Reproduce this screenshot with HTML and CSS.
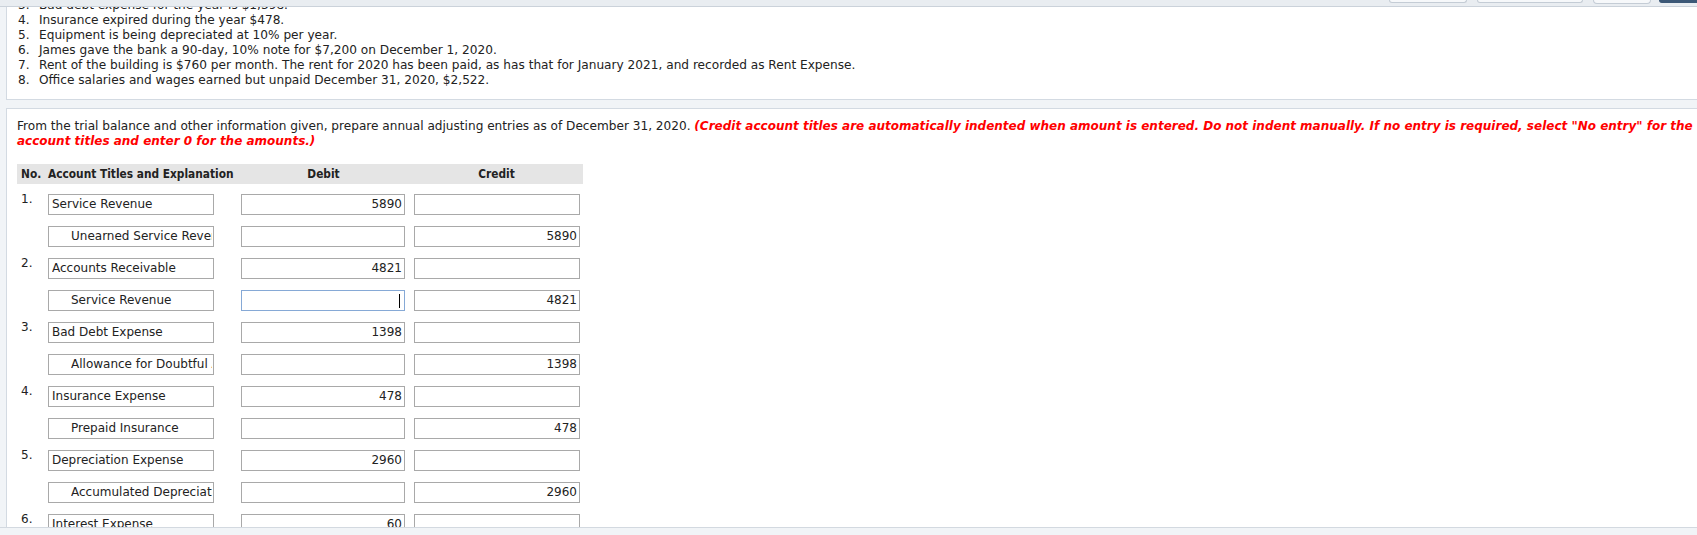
FILE: index.html
```html
<!DOCTYPE html>
<html>
<head>
<meta charset="utf-8">
<title>Adjusting Entries</title>
<link rel="stylesheet" href="styles.css">
</head>
<body>
<div class="toolbar">
  <span class="tbtn w1"></span>
  <span class="tbtn w2"></span>
  <span class="tbtn w3"></span>
  <span class="tbtn dark"></span>
</div>
<div class="viewport">
  <div class="scroller">
    <section class="panel info">
      <ol class="facts">
        <li><span class="num">3.</span><span>Bad debt expense for the year is $1,398.</span></li>
        <li><span class="num">4.</span><span>Insurance expired during the year $478.</span></li>
        <li><span class="num">5.</span><span>Equipment is being depreciated at 10% per year.</span></li>
        <li><span class="num">6.</span><span>James gave the bank a 90-day, 10% note for $7,200 on December 1, 2020.</span></li>
        <li><span class="num">7.</span><span>Rent of the building is $760 per month. The rent for 2020 has been paid, as has that for January 2021, and recorded as Rent Expense.</span></li>
        <li><span class="num">8.</span><span>Office salaries and wages earned but unpaid December 31, 2020, $2,522.</span></li>
      </ol>
    </section>
    <section class="panel work">
      <p class="prompt">From the trial balance and other information given, prepare annual adjusting entries as of December 31, 2020. <em class="note">(Credit account titles are automatically indented when amount is entered. Do not indent manually. If no entry is required, select "No entry" for the account titles and enter 0 for the amounts.)</em></p>
      <div class="journal">
        <div class="jhead">
          <div class="h-no">No.</div>
          <div class="h-acct">Account Titles and Explanation</div>
          <div class="h-amt">Debit</div>
          <div class="h-amt">Credit</div>
        </div>

        <div class="jrow"><div class="no">1.</div><div class="field acct"><span class="txt">Service Revenue</span></div><div class="field amt">5890</div><div class="field amt"></div></div>
        <div class="jrow"><div class="no"></div><div class="field acct cr"><span class="txt">Unearned Service Revenue</span></div><div class="field amt"></div><div class="field amt">5890</div></div>

        <div class="jrow"><div class="no">2.</div><div class="field acct"><span class="txt">Accounts Receivable</span></div><div class="field amt">4821</div><div class="field amt"></div></div>
        <div class="jrow"><div class="no"></div><div class="field acct cr"><span class="txt">Service Revenue</span></div><div class="field amt focus"><span class="caret"></span></div><div class="field amt">4821</div></div>

        <div class="jrow"><div class="no">3.</div><div class="field acct"><span class="txt">Bad Debt Expense</span></div><div class="field amt">1398</div><div class="field amt"></div></div>
        <div class="jrow"><div class="no"></div><div class="field acct cr"><span class="txt">Allowance for Doubtful Accounts</span></div><div class="field amt"></div><div class="field amt">1398</div></div>

        <div class="jrow"><div class="no">4.</div><div class="field acct"><span class="txt">Insurance Expense</span></div><div class="field amt">478</div><div class="field amt"></div></div>
        <div class="jrow"><div class="no"></div><div class="field acct cr"><span class="txt">Prepaid Insurance</span></div><div class="field amt"></div><div class="field amt">478</div></div>

        <div class="jrow"><div class="no">5.</div><div class="field acct"><span class="txt">Depreciation Expense</span></div><div class="field amt">2960</div><div class="field amt"></div></div>
        <div class="jrow"><div class="no"></div><div class="field acct cr"><span class="txt">Accumulated Depreciation - Equipment</span></div><div class="field amt"></div><div class="field amt">2960</div></div>

        <div class="jrow"><div class="no">6.</div><div class="field acct"><span class="txt">Interest Expense</span></div><div class="field amt">60</div><div class="field amt"></div></div>
        <div class="jrow"><div class="no"></div><div class="field acct cr"><span class="txt">Interest Payable</span></div><div class="field amt"></div><div class="field amt">60</div></div>
      </div>
    </section>
  </div>
</div>
<div class="footer-strip"></div>
</body>
</html>
```
FILE: styles.css
```css
html, body {
  margin: 0;
  padding: 0;
  height: 535px;
  overflow: hidden;
  background: #f1f4f7;
  font-family: "DejaVu Sans", Verdana, sans-serif;
  color: #222;
}

.toolbar {
  height: 6px;
  background: #e9edf1;
  border-bottom: 1px solid #cbd2da;
  display: flex;
  justify-content: flex-end;
  align-items: flex-start;
  gap: 10px;
  overflow: hidden;
}

.tbtn {
  display: block;
  height: 2px;
  background: #f6f8fa;
  border: 1px solid #c4ccd5;
  border-top: none;
  border-radius: 0 0 4px 4px;
}
.tbtn.w1 { width: 76px; }
.tbtn.w2 { width: 104px; }
.tbtn.w3 { width: 56px; height: 3px; }
.tbtn.dark { width: 40px; height: 2px; background: #3c5877; border-color: #3c5877; margin-right: -4px; margin-left: -2px; }

.viewport {
  height: 520px;
  overflow: hidden;
  border-bottom: 1px solid #d3d9e0;
  background: #f1f4f7;
}

.scroller {
  margin-top: -10px;
}

.panel {
  margin-left: 6px;
  margin-right: -20px;
  background: #fff;
  border: 1px solid #d3dae2;
  border-right: none;
}

.info {
  padding: 0 0 11px 11px;
}

.facts {
  list-style: none;
  margin: 0;
  padding: 0;
  font-family: "DejaVu Sans", Verdana, sans-serif;
  font-size: 12.15px;
  line-height: 15px;
}
.facts li {
  display: flex;
}
.facts .num {
  width: 21px;
  flex: none;
}

.work {
  margin-top: 8px;
  padding: 10px 0 40px 10px;
}

.prompt {
  margin: 0;
  font-family: "DejaVu Sans", Verdana, sans-serif;
  font-size: 12.12px;
  line-height: 15px;
}
.note {
  color: #f00;
  font-weight: bold;
  font-style: italic;
  font-size: 12px;
}

.journal {
  margin-top: 15px;
  font-size: 12px;
}

.jhead {
  width: 566px;
  height: 20px;
  background: #e5e5e5;
  display: grid;
  grid-template-columns: 31px 193px 173px 169px;
  align-items: center;
  font-family: "DejaVu Sans Condensed", "DejaVu Sans", sans-serif;
  font-stretch: condensed;
  font-weight: bold;
  font-size: 11.8px;
  margin-bottom: 10px;
}
.h-no { padding-left: 4px; }
.h-acct { white-space: nowrap; }
.h-amt { width: 165px; text-align: center; }

.jrow {
  display: grid;
  grid-template-columns: 31px 193px 173px 169px;
  height: 21px;
  margin-bottom: 11px;
  align-items: start;
}
.no {
  padding-left: 4px;
  line-height: 13px;
  margin-top: -1px;
}

.field {
  box-sizing: border-box;
  height: 21px;
  border: 1px solid #a9a9a9;
  background: #fff;
  line-height: 19px;
  white-space: nowrap;
  overflow: hidden;
  color: #222;
}
.field.acct {
  width: 166px;
  padding: 0 1px 0 3px;
}
.field.acct.cr {
  padding-left: 22px;
}
.field .txt {
  display: block;
  overflow: hidden;
  white-space: nowrap;
}
.field.amt {
  width: 164px;
  text-align: right;
  padding-right: 2px;
  position: relative;
}
.jrow .field.amt:last-child {
  width: 166px;
}
.field.focus {
  border-color: #86a9d6;
}
.caret {
  position: absolute;
  right: 4px;
  top: 3px;
  width: 1px;
  height: 14px;
  background: #000;
}

.footer-strip {
  height: 8px;
  background: #f1f4f7;
}
```
